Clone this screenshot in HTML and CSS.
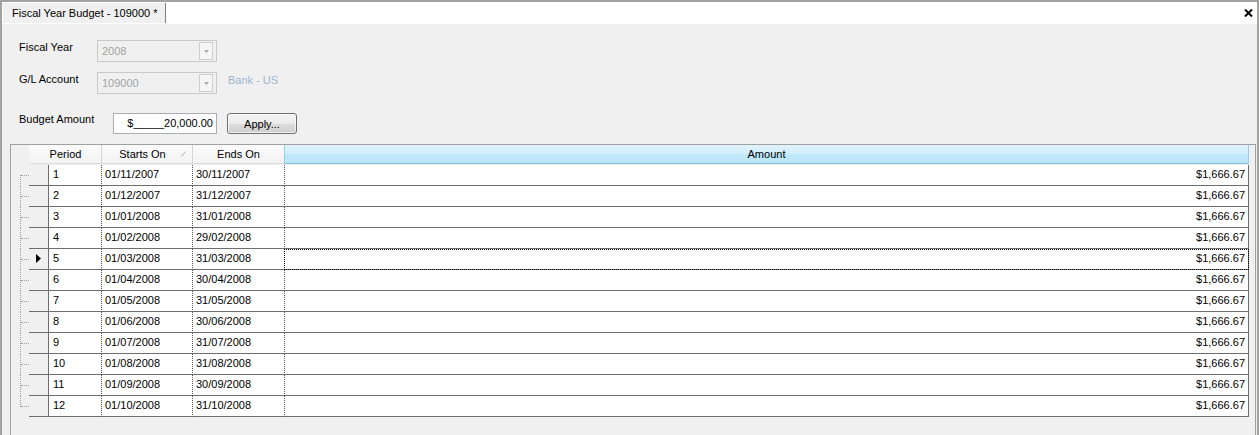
FILE: index.html
```html
<!DOCTYPE html>
<html>
<head>
<meta charset="utf-8">
<link rel="stylesheet" href="styles.css">
</head>
<body>
<div class="window">
  <div class="tabstrip">
    <div class="tab">Fiscal Year Budget - 109000 *</div>
    <div class="close"><svg width="9" height="8" viewBox="0 0 9 8"><path d="M1 0.5 L8 7.5 M8 0.5 L1 7.5" stroke="#000" stroke-width="2"/></svg></div>
  </div>
  <div class="content">
    <div class="form">
      <div class="frow">
        <div class="label">Fiscal Year</div>
        <div class="combo"><span class="ctext">2008</span><span class="dd"><svg width="5" height="3" viewBox="0 0 5 3"><path d="M0 0 H5 L2.5 3 Z" fill="#a8a8a8"/></svg></span></div>
      </div>
      <div class="frow">
        <div class="label">G/L Account</div>
        <div class="combo"><span class="ctext">109000</span><span class="dd"><svg width="5" height="3" viewBox="0 0 5 3"><path d="M0 0 H5 L2.5 3 Z" fill="#a8a8a8"/></svg></span></div>
        <div class="acctname">Bank - US</div>
      </div>
      <div class="frow budget">
        <div class="label wide">Budget Amount</div>
        <div class="textbox">$_____20,000.00</div>
        <div class="button">Apply...</div>
      </div>
    </div>
    <div class="grid">
      <div class="ghead">
        <div class="gcorner"></div>
        <div class="hcell c-period">Period</div>
        <div class="hcell c-start">Starts On<svg class="sort" width="5" height="6" viewBox="0 0 5 6"><path d="M0.5 5.5 L4.5 0.5" stroke="#b0b0b0" stroke-width="1"/></svg></div>
        <div class="hcell c-end">Ends On</div>
        <div class="hcell c-amount sel">Amount</div>
      </div>
      <div class="gbody">
        <div class="grow first"><div class="conn"></div><div class="rsel"></div><div class="cell c-p">1</div><div class="cell c-s">01/11/2007</div><div class="cell c-e">30/11/2007</div><div class="cell c-a">$1,666.67</div></div>
        <div class="grow"><div class="conn"></div><div class="rsel"></div><div class="cell c-p">2</div><div class="cell c-s">01/12/2007</div><div class="cell c-e">31/12/2007</div><div class="cell c-a">$1,666.67</div></div>
        <div class="grow"><div class="conn"></div><div class="rsel"></div><div class="cell c-p">3</div><div class="cell c-s">01/01/2008</div><div class="cell c-e">31/01/2008</div><div class="cell c-a">$1,666.67</div></div>
        <div class="grow"><div class="conn"></div><div class="rsel"></div><div class="cell c-p">4</div><div class="cell c-s">01/02/2008</div><div class="cell c-e">29/02/2008</div><div class="cell c-a">$1,666.67</div></div>
        <div class="grow"><div class="conn"></div><div class="rsel"><svg width="5" height="9" viewBox="0 0 5 9"><path d="M0 0 L5 4.5 L0 9 Z" fill="#000"/></svg></div><div class="cell c-p">5</div><div class="cell c-s">01/03/2008</div><div class="cell c-e">31/03/2008</div><div class="cell c-a focus">$1,666.67</div></div>
        <div class="grow"><div class="conn"></div><div class="rsel"></div><div class="cell c-p">6</div><div class="cell c-s">01/04/2008</div><div class="cell c-e">30/04/2008</div><div class="cell c-a">$1,666.67</div></div>
        <div class="grow"><div class="conn"></div><div class="rsel"></div><div class="cell c-p">7</div><div class="cell c-s">01/05/2008</div><div class="cell c-e">31/05/2008</div><div class="cell c-a">$1,666.67</div></div>
        <div class="grow"><div class="conn"></div><div class="rsel"></div><div class="cell c-p">8</div><div class="cell c-s">01/06/2008</div><div class="cell c-e">30/06/2008</div><div class="cell c-a">$1,666.67</div></div>
        <div class="grow"><div class="conn"></div><div class="rsel"></div><div class="cell c-p">9</div><div class="cell c-s">01/07/2008</div><div class="cell c-e">31/07/2008</div><div class="cell c-a">$1,666.67</div></div>
        <div class="grow"><div class="conn"></div><div class="rsel"></div><div class="cell c-p">10</div><div class="cell c-s">01/08/2008</div><div class="cell c-e">31/08/2008</div><div class="cell c-a">$1,666.67</div></div>
        <div class="grow"><div class="conn"></div><div class="rsel"></div><div class="cell c-p">11</div><div class="cell c-s">01/09/2008</div><div class="cell c-e">30/09/2008</div><div class="cell c-a">$1,666.67</div></div>
        <div class="grow last"><div class="conn"></div><div class="rsel"></div><div class="cell c-p">12</div><div class="cell c-s">01/10/2008</div><div class="cell c-e">31/10/2008</div><div class="cell c-a">$1,666.67</div></div>
      </div>
    </div>
  </div>
</div>
</body>
</html>
```

FILE: styles.css
```css
* { box-sizing: border-box; }
html, body {
  margin: 0;
  padding: 0;
}
body {
  width: 1259px;
  height: 435px;
  overflow: hidden;
  font-family: "Liberation Sans", Arial, sans-serif;
  font-size: 11px;
  color: #000;
  background: #f0f0f0;
}
.window {
  width: 1259px;
  height: 435px;
  overflow: hidden;
  border-top: 2px solid #a3a3a0;
  border-left: 2px solid #a3a3a0;
  border-right: 2px solid #a3a3a0;
  background: #f0f0f0;
  display: flex;
  flex-direction: column;
}
.tabstrip {
  height: 22px;
  flex: none;
  background: #fff;
  display: flex;
  align-items: stretch;
}
.tab {
  width: 164px;
  background: #f0f0f0;
  border-left: 1px solid #ffffff;
  border-right: 1px solid #7d7d7d;
  margin-top: 1px;
  margin-bottom: 1px;
  padding-left: 9px;
  line-height: 20px;
  white-space: nowrap;
}
.close {
  margin-left: auto;
  padding-right: 4px;
  padding-top: 7px;
  display: flex;
  align-items: flex-start;
}
.close svg { display: block; }
.content {
  flex: 1;
  display: flex;
  flex-direction: column;
  min-height: 0;
}
.form {
  padding: 16px 0 0 16px;
  display: flex;
  flex-direction: column;
  gap: 10px;
}
.frow {
  display: flex;
  align-items: flex-start;
  height: 22px;
}
.frow.budget {
  margin-top: 9px;
  height: 21px;
}
.label {
  width: 79px;
  line-height: 14px;
  padding-left: 1px;
  white-space: nowrap;
}
.label.wide {
  width: 95px;
  line-height: 12px;
}
.combo {
  width: 120px;
  height: 22px;
  border: 1px solid #c9c9c9;
  background: #f0f0f0;
  display: flex;
  align-items: center;
  padding-left: 4px;
  padding-right: 3px;
  color: #a3a3a3;
}
.ctext { flex: 1; line-height: 20px; }
.dd {
  width: 14px;
  height: 18px;
  border: 1px solid #cdcdcd;
  background: #f6f6f6;
  display: flex;
  align-items: center;
  justify-content: center;
}
.dd svg { display: block; }
.acctname {
  margin-left: 11px;
  line-height: 14px;
  padding-top: 1px;
  color: #9fb5cd;
}
.textbox {
  width: 104px;
  height: 21px;
  border: 1px solid #abadb3;
  background: #fff;
  text-align: right;
  padding-right: 3px;
  line-height: 19px;
  white-space: nowrap;
}
.button {
  margin-left: 10px;
  width: 70px;
  height: 21px;
  border: 1px solid #707070;
  border-radius: 3px;
  background: linear-gradient(#f3f3f3 0%, #ebebeb 50%, #dddddd 51%, #cfcfcf 100%);
  box-shadow: inset 0 0 0 1px rgba(255,255,255,0.7);
  text-align: center;
  line-height: 20px;
}
.grid {
  margin: 10px 1px 0 8px;
  height: 400px;
  flex: none;
  border: 1px solid #a0a0a0;
  background: #f0f0f0;
  display: flex;
  flex-direction: column;
}
.ghead {
  display: flex;
  height: 19px;
  flex: none;
}
.gcorner {
  width: 18px;
  flex: none;
  background: #f0f0f0;
}
.hcell {
  height: 19px;
  background: linear-gradient(#fbfbfb, #f3f3f3);
  border-bottom: 1px solid #dcdcdc;
  border-left: 1px solid #d5d5d5;
  text-align: center;
  line-height: 18px;
  position: relative;
  white-space: nowrap;
}
.hcell.c-period { width: 72px; border-left: none; padding-left: 1px; }
.hcell.c-start { width: 91px; padding-right: 9px; }
.hcell.c-end { width: 92px; }
.hcell.c-amount { width: 965px; }
.hcell.sel {
  background: linear-gradient(#e0f3fc 0%, #d3eefb 45%, #bfe7fa 55%, #bde6f9 100%);
  border-left: 1px solid #97cfec;
  border-right: 1px solid #97cfec;
  border-bottom: 1px solid #7cbfe5;
}
.sort {
  position: absolute;
  right: 6px;
  top: 6px;
}
.gbody {
  display: flex;
  flex-direction: column;
  padding-top: 1px;
}
.grow {
  display: flex;
  height: 21px;
}
.conn {
  width: 18px;
  flex: none;
  position: relative;
}
.conn::before {
  content: "";
  position: absolute;
  left: 9px;
  top: 0;
  bottom: 0;
  border-left: 1px dotted #a0a0a0;
}
.grow.first .conn::before { top: 10px; }
.grow.last .conn::before { bottom: 10px; }
.conn::after {
  content: "";
  position: absolute;
  left: 10px;
  width: 8px;
  top: 10px;
  border-top: 1px dotted #a0a0a0;
}
.rsel {
  width: 19px;
  flex: none;
  background: #f0f0f0;
  border-bottom: 1px solid #6e6e6e;
  display: flex;
  align-items: center;
  padding-left: 7px;
  padding-bottom: 1px;
}
.rsel svg { display: block; }
.cell {
  background: #fff;
  border-bottom: 1px solid #6e6e6e;
  line-height: 19px;
  padding-left: 4px;
  white-space: nowrap;
  overflow: hidden;
}
.c-p { width: 53px; border-left: 1px solid #6e6e6e; }
.c-s { width: 91px; border-left: 1px dotted #555; padding-left: 3px; }
.c-e { width: 92px; border-left: 1px dotted #555; padding-left: 3px; }
.c-a {
  width: 965px;
  border-left: 1px dotted #555;
  border-right: 1px solid #6e6e6e;
  text-align: right;
  padding-right: 3px;
}
.c-a.focus {
  outline: 1px dotted #000;
  outline-offset: -1px;
}
```
